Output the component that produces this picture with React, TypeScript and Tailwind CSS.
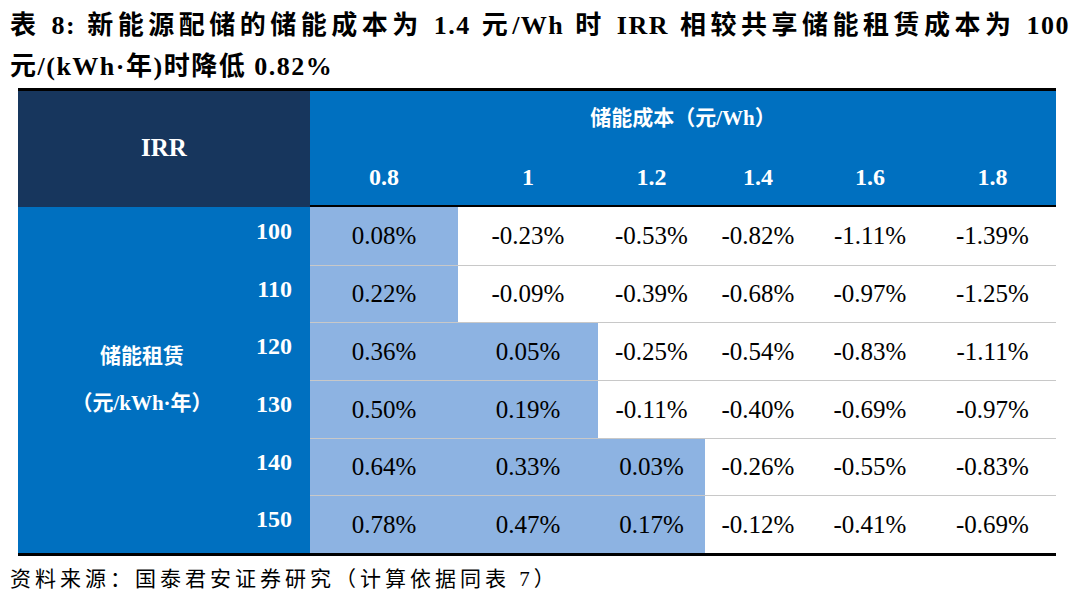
const serif = "font-['Liberation_Serif','Noto_Sans_CJK_SC',serif]"

const costs = ['0.8', '1', '1.2', '1.4', '1.6', '1.8']
const leases = ['100', '110', '120', '130', '140', '150']

const rows = [
  ['0.08%', '-0.23%', '-0.53%', '-0.82%', '-1.11%', '-1.39%'],
  ['0.22%', '-0.09%', '-0.39%', '-0.68%', '-0.97%', '-1.25%'],
  ['0.36%', '0.05%', '-0.25%', '-0.54%', '-0.83%', '-1.11%'],
  ['0.50%', '0.19%', '-0.11%', '-0.40%', '-0.69%', '-0.97%'],
  ['0.64%', '0.33%', '0.03%', '-0.26%', '-0.55%', '-0.83%'],
  ['0.78%', '0.47%', '0.17%', '-0.12%', '-0.41%', '-0.69%'],
]

// how many cells in each row sit on the light-blue band
const shaded = [1, 1, 2, 2, 3, 3]

const App = () => {
  return (
    <div className={`w-[1080px] h-[601px] bg-white text-black ${serif}`}>
      <div className="px-[10px] pt-[5px] font-bold text-[26px] leading-[41px] tracking-[1.5px]">
        <div className="text-justify [text-align-last:justify] whitespace-nowrap">
          表 8: 新能源配储的储能成本为 1.4 元/Wh 时 IRR 相较共享储能租赁成本为 100
        </div>
        <div>元/(kWh·年)时降低 0.82%</div>
      </div>

      <div className="ml-[18px] mt-[1px] w-[1038px] border-t-[3px] border-b-[3px] border-black">
        <div className="grid grid-cols-[292px_148px_140px_107px_106px_118px_127px]">
          <div className="row-span-2 bg-[#17365d] text-white font-bold text-[25px] flex items-center justify-center pb-[2px]">
            IRR
          </div>
          <div className="col-span-6 h-[58px] bg-[#0070c0] text-white font-bold text-[21px] flex items-center justify-center pb-[2px]">
            储能成本（元/Wh）
          </div>
          {costs.map((c) => (
            <div
              key={c}
              className="h-[58px] bg-[#0070c0] text-white font-bold text-[24px] flex items-center justify-center border-b-2 border-black"
            >
              {c}
            </div>
          ))}

          <div className="row-span-6 bg-[#0070c0] text-white flex">
            <div className="flex-1 flex flex-col items-center justify-center pl-[10px] text-[21px] leading-[47px] font-bold">
              <div>储能租赁</div>
              <div>（元/kWh·年）</div>
            </div>
            <div className="flex flex-col pr-[18px] font-bold text-[24px]">
              {leases.map((l) => (
                <div key={l} className="h-[57.7px] flex items-center justify-end pb-[10px]">
                  {l}
                </div>
              ))}
            </div>
          </div>

          {rows.map((row, r) =>
            row.map((v, c) => (
              <div
                key={`${r}-${c}`}
                className={`h-[57.7px] flex items-center justify-center text-[25px] ${
                  r > 0 ? 'border-t border-[#c8c8c8]' : ''
                } ${c < shaded[r] ? 'bg-[#8db3e2]' : 'bg-white'}`}
              >
                {v}
              </div>
            ))
          )}
        </div>
      </div>

      <div className="pl-[10px] pt-[9px] text-[21px] tracking-[4px] leading-[28px]">
        资料来源：国泰君安证券研究（计算依据同表 7）
      </div>
    </div>
  )
}

export default App
